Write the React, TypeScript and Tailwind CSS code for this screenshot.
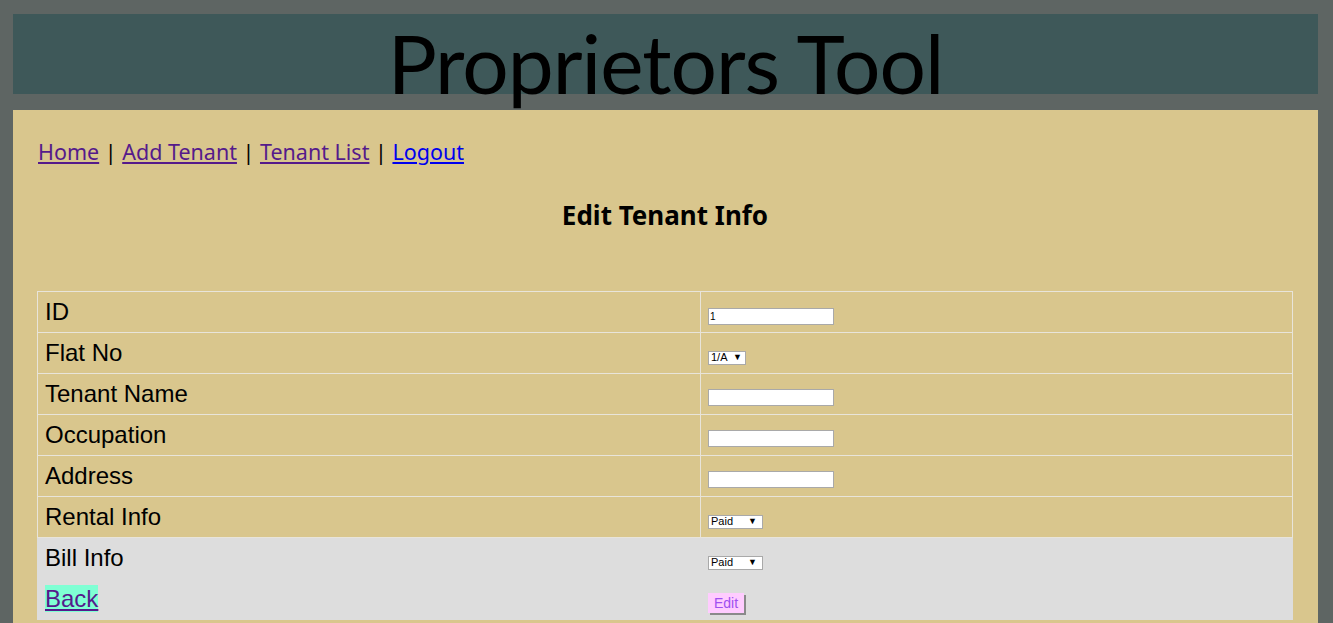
const ROWS = ['ID', 'Flat No', 'Tenant Name', 'Occupation', 'Address', 'Rental Info'];

function Field({ label }: { label: string }) {
  if (label === 'ID') {
    return (
      <input
        defaultValue="1"
        className="w-[126px] h-[17px] bg-white border border-[#a9a9a9] px-[1px] text-[10px] leading-none text-black font-['Liberation_Sans',sans-serif]"
      />
    );
  }
  if (label === 'Flat No') {
    return (
      <span className="inline-flex items-center justify-between w-[38px] h-[14px] bg-white border border-[#a9a9a9] pl-[2px] pr-[3px] text-[11px] leading-none text-black font-['Liberation_Sans',sans-serif]">
        1/A <span className="text-[9px]">▼</span>
      </span>
    );
  }
  if (label === 'Rental Info') return <PaidSelect />;
  return <input className="w-[126px] h-[17px] bg-white border border-[#a9a9a9]" />;
}

function PaidSelect() {
  return (
    <span className="inline-flex items-center justify-between w-[55px] h-[14px] bg-white border border-[#a9a9a9] pl-[2px] pr-[5px] text-[11px] leading-none text-black font-['Liberation_Sans',sans-serif]">
      Paid <span className="text-[9px]">▼</span>
    </span>
  );
}

export default function App() {
  return (
    <div className="min-h-[623px] bg-[#5e6563] pl-[13px] pr-[15px] pt-[14px] font-['Liberation_Sans',sans-serif]">
      <header className="h-[80px] bg-[#3e5859] flex justify-center">
        <h1 className="text-[82px] leading-[80px] pt-[8px] text-black font-['Lato',sans-serif] tracking-[-1px] whitespace-nowrap">
          Proprietors Tool
        </h1>
      </header>

      <main className="mt-[16px] bg-[#d9c68d] pl-[24px] pr-[25px] pt-[27px] pb-[4px]">
        <nav className="text-[21.5px] leading-[30px] font-['Noto_Sans',sans-serif] text-black pl-[1px]">
          <a href="#" className="underline text-[#551a8b]">Home</a> |{' '}
          <a href="#" className="underline text-[#551a8b]">Add Tenant</a> |{' '}
          <a href="#" className="underline text-[#551a8b]">Tenant List</a> |{' '}
          <a href="#" className="underline text-[#0000ee]">Logout</a>
        </nav>

        <h2 className="mt-[32px] text-center text-[26px] leading-[32px] font-bold font-['Noto_Sans',sans-serif] text-black">
          Edit Tenant Info
        </h2>

        <div className="mt-[60px] border-t border-[#e8e4da]">
          {ROWS.map((label) => (
            <div key={label} className="grid grid-cols-[663px_1fr] h-[41px] border-b border-x border-[#e8e4da]">
              <div className="border-r border-[#e8e4da] pl-[7px] pt-[7px] text-[24px] leading-[26px] text-black">
                {label}
              </div>
              <div className="pl-[7px] pt-[15px] leading-none">
                <Field label={label} />
              </div>
            </div>
          ))}
          <div className="bg-[#dddddd]">
            <div className="grid grid-cols-[663px_1fr] h-[41px]">
              <div className="pl-[8px] pt-[7px] text-[24px] leading-[26px] text-black">Bill Info</div>
              <div className="pl-[8px] pt-[15px] leading-none">
                <PaidSelect />
              </div>
            </div>
            <div className="grid grid-cols-[663px_1fr] h-[41px]">
              <div className="pl-[8px] pt-[7px] text-[24px] leading-[26px]">
                <a href="#" className="underline text-[#551a8b] bg-[#7fffd4]">Back</a>
              </div>
              <div className="pl-[8px] pt-[14px] leading-none">
                <button className="h-[20px] px-[5px] bg-[#ffccff] text-[#a050f0] text-[14px] leading-none border border-[#ffccff] shadow-[2px_2px_0_#8a8a8a] font-['Liberation_Sans',sans-serif]">
                  Edit
                </button>
              </div>
            </div>
          </div>
        </div>
      </main>
    </div>
  );
}
